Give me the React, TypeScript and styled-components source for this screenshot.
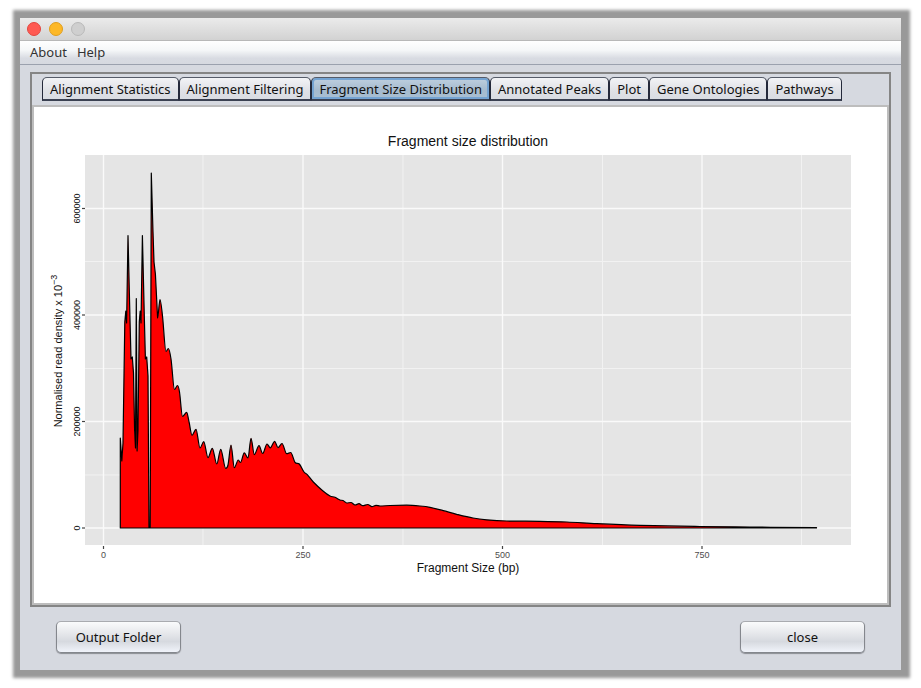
import React, { useState } from "react";
import styled, { createGlobalStyle } from "styled-components";

const GlobalStyle = createGlobalStyle`
  *, *::before, *::after { box-sizing: border-box; }
  body {
    margin: 0;
    background: #fff;
    font-family: "Noto Sans", "Open Sans", sans-serif;
    font-size: 13px;
    color: #111;
  }
  button { font: inherit; color: inherit; cursor: default; }
`;

const Page = styled.main`
  min-height: 100vh;
  padding: 18px 20px;
  display: flex;
`;

const Window = styled.section`
  flex: 1;
  min-width: 0;
  display: flex;
  flex-direction: column;
  background: #d6d9e0;
  box-shadow: 1px 0 3px 8px #999;
`;

const TitleBar = styled.header`
  height: 23px;
  padding: 0 7px;
  display: flex;
  align-items: center;
  gap: 8px;
  background: linear-gradient(#ebebeb, #d2d2d2);
  border-bottom: 1px solid #b8b8b8;
`;

const Light = styled.button<{ $fill: string; $edge: string }>`
  width: 14px;
  height: 14px;
  padding: 0;
  border: 1px solid ${(p) => p.$edge};
  border-radius: 50%;
  background: ${(p) => p.$fill};
`;

const MenuBar = styled.nav`
  height: 24px;
  padding: 0 10px 2px;
  display: flex;
  align-items: center;
  gap: 10px;
  background: linear-gradient(#fff, #f5f7f8 40%, #d8dbe2 75%, #d6d9e0);
  border-bottom: 1px solid #9ba1ae;
`;

const MenuItem = styled.button`
  padding: 0;
  border: 0;
  background: none;
  color: #333;
`;

const Frame = styled.div`
  margin: 7px 10px 0;
  border: 2px solid #858585;
`;

const Tabs = styled.div`
  display: flex;
  padding: 3px 10px 4px;
`;

const Tab = styled.button<{ $active: boolean }>`
  height: 24px;
  padding: 0 7px;
  line-height: 20px;
  white-space: nowrap;
  border: 1px solid #24293a;
  border-top-color: #555b68;
  border-bottom: 2px solid #3b4152;
  border-radius: 5px 5px 0 0;
  background: ${(p) =>
    p.$active
      ? "linear-gradient(#bfd0e0, #a5bace 60%, #a9bfd3)"
      : "linear-gradient(#f2f3f6, #dfe1e6 60%, #d9dce2)"};
  box-shadow: ${(p) => (p.$active ? "inset 0 0 0 2px #74a3d2" : "none")};
`;

const Panel = styled.div`
  background: #fff;
  border: 2px solid #bdbdbd;
`;

const Chart = styled.svg`
  display: block;
  width: 100%;
  height: auto;
  font-family: "Liberation Sans", Arial, sans-serif;
`;

const Footer = styled.footer`
  flex: 1;
  display: flex;
  justify-content: space-between;
  align-items: flex-start;
  padding: 14px 36px;
`;

const ActionButton = styled.button`
  width: 125px;
  height: 32px;
  padding: 0 8px;
  border: 1px solid #84878d;
  border-top-color: #a9abb0;
  border-radius: 5px;
  background: linear-gradient(#fafbfc, #e2e4e8 45%, #d6d9df 65%, #f0f3fa);
  box-shadow: 0 1px 1px #8a8d93;
`;

type Point = [number, number];

const fragmentPeaks: Point[] = [
  [120.3, 528], [120.3, 438], [121.8, 461], [123, 443], [124.8, 322], [125.8, 311],
  [126.6, 323], [128, 235.5], [130, 320], [131, 359], [132.3, 357], [133.5, 373],
  [134.6, 430], [135.5, 448], [136.3, 298.5], [137.1, 451], [138, 430], [139.3, 322],
  [140.2, 311], [141, 323], [142.4, 235.5], [144.4, 320], [145.4, 359], [146.7, 357],
  [148, 376], [149, 528], [150.2, 528], [151.3, 173], [153, 232], [154, 262],
  [155.4, 274], [157.6, 318],
];

const tail: Point[] = [
  [157.6, 318], [160, 299.5], [162.5, 316], [166, 351.5], [168.3, 348.5], [171, 359],
  [174.5, 389.5], [177.5, 385.5], [179.5, 392], [182.5, 416.5], [186.7, 412.3], [189, 421.7],
  [192, 435.3], [196, 429.3], [200, 448], [203.7, 441.7], [208, 457.6], [212.3, 448.3],
  [216.8, 464], [220.7, 449.3], [225.7, 468.3], [228, 465], [231, 445], [234.3, 467.7],
  [238.3, 460], [240.5, 462.5], [244.3, 452.8], [248, 458], [251, 438.3], [254.3, 454.6],
  [259, 445.7], [262.7, 453.5], [267, 444], [270.3, 447.8], [274.7, 441.3], [278, 447.7],
  [282, 443.5], [286.7, 453.7], [290.7, 452.5], [295, 462.3], [299.3, 464], [304, 472],
  [307.3, 474.7], [313.3, 482], [322.7, 490.7], [330, 496], [335, 497.3], [340, 500],
  [343, 500.5], [346.7, 503], [351, 502.5], [355, 505], [359, 503.7], [362.7, 505.7],
  [367.7, 504.5], [372, 506.6], [376, 505.3], [380, 506], [390, 505.5], [406.7, 505.2],
  [420, 506], [430, 507.3], [443.3, 510.7], [456.7, 514.3], [473, 518], [486.7, 519.8],
  [506.7, 521], [540, 521.3], [566.7, 522], [596.7, 523.7], [640, 525.4], [700, 526.5],
  [750, 527], [816.5, 527.6],
];

const slopeAt = (i: number): number => {
  const prev = tail[Math.max(i - 1, 0)];
  const here = tail[i];
  const next = tail[Math.min(i + 1, tail.length - 1)];
  const isTurn = (here[1] - prev[1]) * (next[1] - here[1]) <= 0;
  return isTurn ? 0 : (next[1] - prev[1]) / (next[0] - prev[0]);
};

const smooth = tail
  .slice(1)
  .map((p, i) => {
    const from = tail[i];
    const step = (p[0] - from[0]) / 3;
    return `C${from[0] + step},${from[1] + slopeAt(i) * step} ${p[0] - step},${p[1] - slopeAt(i + 1) * step} ${p[0]},${p[1]}`;
  })
  .join(" ");

const densityPath = `M${fragmentPeaks.map((p) => p.join(",")).join(" L")} ${smooth} L816.5,528 Z`;

const xTicks = [
  { at: 103.5, label: "0" },
  { at: 303, label: "250" },
  { at: 502.5, label: "500" },
  { at: 702, label: "750" },
];
const yTicks = [
  { at: 528, label: "0" },
  { at: 421.5, label: "200000" },
  { at: 315, label: "400000" },
  { at: 208.5, label: "600000" },
];

const DensityChart = () => (
  <Chart viewBox="34 107 853 496" role="img" aria-label="Fragment size distribution">
    <rect x="85" y="155" width="766" height="390" fill="#e5e5e5" />
    <g stroke="#f2f2f2" strokeWidth="1">
      {[203, 403, 602.5, 801.5].map((x) => (
        <line key={x} x1={x} x2={x} y1="155" y2="545" />
      ))}
      {[261.5, 368.5, 475].map((y) => (
        <line key={y} x1="85" x2="851" y1={y} y2={y} />
      ))}
    </g>
    <g stroke="#fafafa" strokeWidth="1.4">
      {xTicks.map((t) => (
        <line key={t.at} x1={t.at} x2={t.at} y1="155" y2="545" />
      ))}
      {yTicks.map((t) => (
        <line key={t.at} x1="85" x2="851" y1={t.at} y2={t.at} />
      ))}
    </g>
    <path d={densityPath} fill="#f00" stroke="#000" strokeWidth="1.2" strokeLinejoin="round" />
    <g stroke="#444" strokeWidth="1.2">
      {xTicks.map((t) => (
        <line key={t.at} x1={t.at} x2={t.at} y1="546" y2="549" />
      ))}
      {yTicks.map((t) => (
        <line key={t.at} x1="82" x2="85" y1={t.at} y2={t.at} />
      ))}
    </g>
    <g fontSize="9" textAnchor="middle">
      {xTicks.map((t) => (
        <text key={t.label} x={t.at} y="558" fill="#4d4d4d">
          {t.label}
        </text>
      ))}
      {yTicks.map((t) => (
        <text key={t.label} transform={`translate(80 ${t.at}) rotate(-90)`} fill="#111">
          {t.label}
        </text>
      ))}
    </g>
    <g fill="#111" textAnchor="middle">
      <text x="468" y="146" fontSize="14">
        Fragment size distribution
      </text>
      <text x="468" y="572" fontSize="12">
        Fragment Size (bp)
      </text>
      <text transform="translate(62 351) rotate(-90)" fontSize="11">
        Normalised read density x 10
        <tspan dy="-5" fontSize="9">
          −3
        </tspan>
      </text>
    </g>
  </Chart>
);

const tabNames = [
  "Alignment Statistics",
  "Alignment Filtering",
  "Fragment Size Distribution",
  "Annotated Peaks",
  "Plot",
  "Gene Ontologies",
  "Pathways",
];

export default function App() {
  const [active, setActive] = useState("Fragment Size Distribution");
  return (
    <>
      <GlobalStyle />
      <Page>
        <Window>
          <TitleBar>
            <Light $fill="#ff5a52" $edge="#e2463f" aria-label="Close window" />
            <Light $fill="#fdb827" $edge="#e09e1d" aria-label="Minimise window" />
            <Light $fill="#cfcfcf" $edge="#b9b9b9" aria-label="Zoom window" disabled />
          </TitleBar>
          <MenuBar>
            <MenuItem>About</MenuItem>
            <MenuItem>Help</MenuItem>
          </MenuBar>
          <Frame>
            <Tabs role="tablist">
              {tabNames.map((name) => (
                <Tab
                  key={name}
                  role="tab"
                  aria-selected={name === active}
                  $active={name === active}
                  onClick={() => setActive(name)}
                >
                  {name}
                </Tab>
              ))}
            </Tabs>
            <Panel role="tabpanel" aria-label={active}>
              <DensityChart />
            </Panel>
          </Frame>
          <Footer>
            <ActionButton>Output Folder</ActionButton>
            <ActionButton>close</ActionButton>
          </Footer>
        </Window>
      </Page>
    </>
  );
}
